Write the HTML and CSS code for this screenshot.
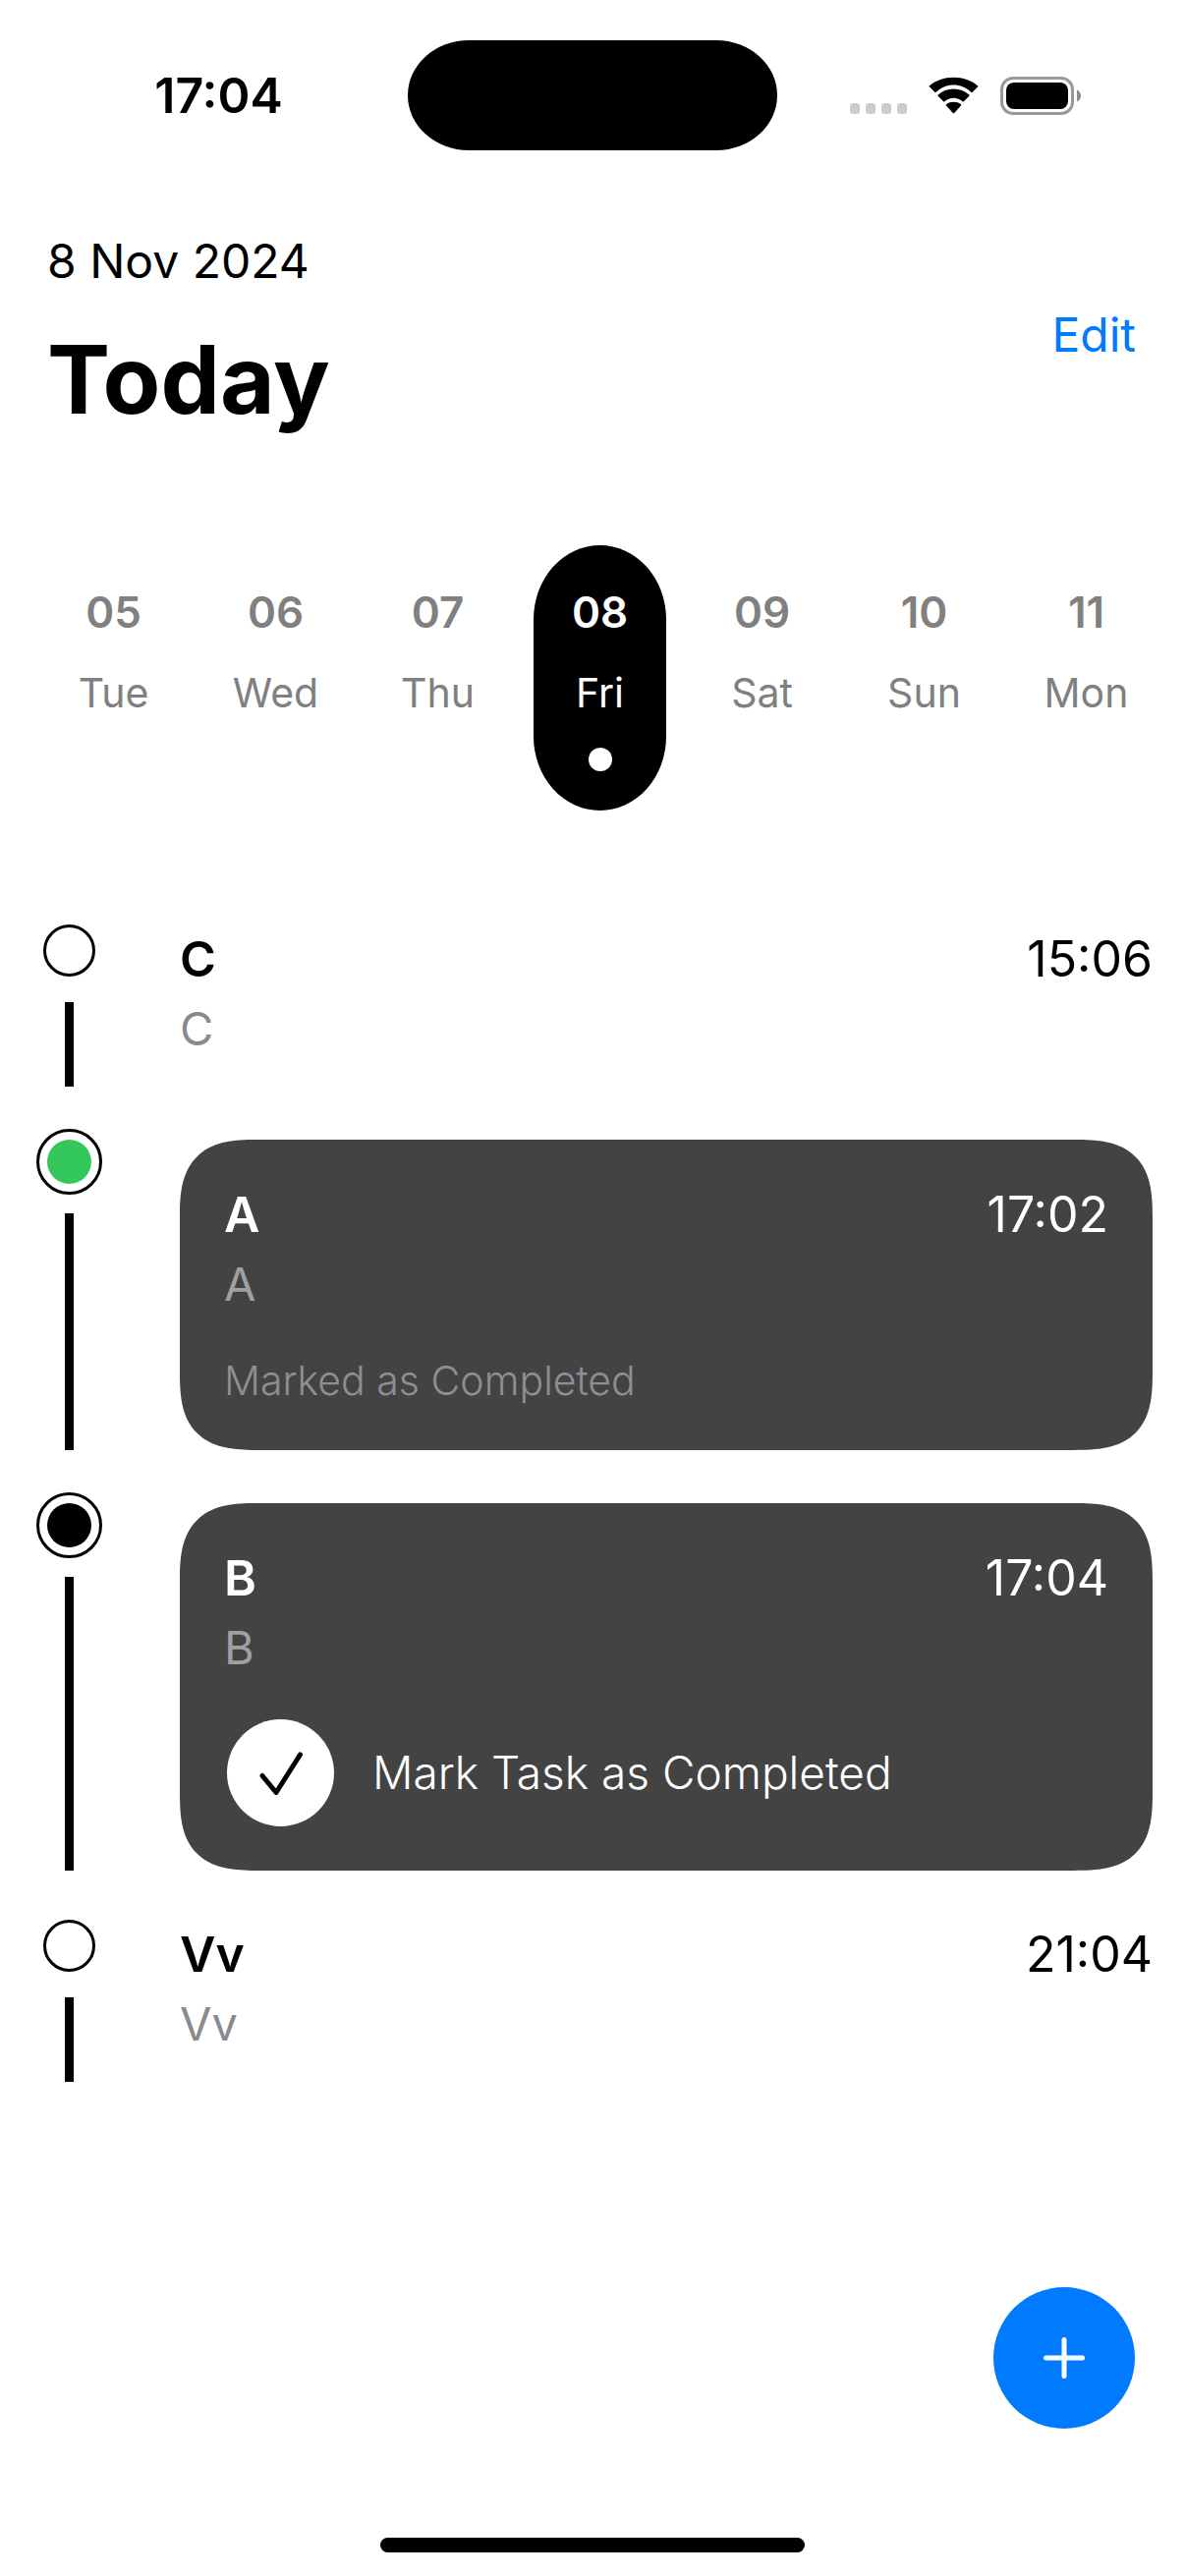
FILE: index.html
```html
<!DOCTYPE html>
<html lang="en">
<head>
<meta charset="utf-8">
<meta name="viewport" content="width=device-width, initial-scale=1">
<title>Today</title>
<link rel="stylesheet" href="styles.css">
</head>
<body>
<div class="screen">
  <div class="status-bar">
    <span class="status-time">17:04</span>
    <span class="island"></span>
    <span class="status-icons">
      <svg class="icon-cell" viewBox="0 0 58 38" aria-hidden="true">
        <rect x="0" y="27" width="10" height="11" rx="3"/>
        <rect x="16" y="27" width="10" height="11" rx="3"/>
        <rect x="32" y="27" width="10" height="11" rx="3"/>
        <rect x="48" y="27" width="10" height="11" rx="3"/>
      </svg>
      <svg class="icon-wifi" viewBox="0 0 50 37" aria-hidden="true">
        <path d="M25 8.200c6.700 0 12.900 2.600 17.500 7.200.4.400 1 .4 1.300 0l5.200-5.200c.4-.4.400-1 0-1.300C42.600 3.400 34.200.500 25 .500S7.400 3.400 1 8.900c-.4.300-.4.900 0 1.300l5.200 5.200c.3.400.9.400 1.300 0C12.100 10.800 18.300 8.200 25 8.200z"/>
        <path d="M25 21.200c3.400 0 6.500 1.200 8.900 3.400.4.300.9.300 1.300 0l5.300-5.300c.4-.4.400-1 0-1.300-4.100-3.700-9.500-5.800-15.500-5.800S13.600 14.300 9.500 18c-.4.300-.4.900 0 1.300l5.300 5.300c.4.300.9.300 1.300 0 2.400-2.200 5.500-3.400 8.900-3.400z"/>
        <path d="M32.300 28.700c.4-.4.400-1-.1-1.300C30.200 25.900 27.700 25.200 25 25.200s-5.200.7-7.200 2.200c-.5.300-.5.900-.1 1.300l6.600 7.500c.4.400 1 .4 1.400 0z"/>
      </svg>
      <svg class="icon-battery" viewBox="0 0 82 39" aria-hidden="true">
        <rect class="battery-frame" x="1.500" y="1.500" width="72" height="36" rx="11.500"/>
        <rect x="6" y="6" width="63" height="27" rx="8"/>
        <path class="battery-tip" d="M78 13.500c2.300.9 4 3.300 4 6s-1.700 5.100-4 6z"/>
      </svg>
    </span>
  </div>

  <header class="page-header">
    <div class="heading">
      <p class="date">8 Nov 2024</p>
      <h1 class="title">Today</h1>
    </div>
    <button class="edit" type="button">Edit</button>
  </header>

  <nav class="week" aria-label="Days">
    <button class="day" type="button"><span class="day-number">05</span><span class="day-name">Tue</span></button>
    <button class="day" type="button"><span class="day-number">06</span><span class="day-name">Wed</span></button>
    <button class="day" type="button"><span class="day-number">07</span><span class="day-name">Thu</span></button>
    <button class="day day-selected" type="button" aria-current="date"><span class="day-number">08</span><span class="day-name">Fri</span><span class="day-dot"></span></button>
    <button class="day" type="button"><span class="day-number">09</span><span class="day-name">Sat</span></button>
    <button class="day" type="button"><span class="day-number">10</span><span class="day-name">Sun</span></button>
    <button class="day" type="button"><span class="day-number">11</span><span class="day-name">Mon</span></button>
  </nav>

  <main class="tasks">
    <article class="task">
      <div class="rail">
        <span class="marker"><svg class="ring" viewBox="0 0 67 67" aria-hidden="true"><circle cx="33.500" cy="33.500" r="25"/></svg></span>
        <span class="line"></span>
      </div>
      <div class="task-body">
        <div class="task-head"><h2 class="task-title">C</h2><time class="task-time">15:06</time></div>
        <p class="task-note">C</p>
      </div>
    </article>

    <article class="task">
      <div class="rail">
        <span class="marker marker-done"><svg class="ring" viewBox="0 0 67 67" aria-hidden="true"><circle cx="33.500" cy="33.500" r="32"/></svg></span>
        <span class="line"></span>
      </div>
      <div class="task-body card">
        <div class="task-head"><h2 class="task-title">A</h2><time class="task-time">17:02</time></div>
        <p class="task-note">A</p>
        <p class="task-state">Marked as Completed</p>
      </div>
    </article>

    <article class="task">
      <div class="rail">
        <span class="marker marker-now"><svg class="ring" viewBox="0 0 67 67" aria-hidden="true"><circle cx="33.500" cy="33.500" r="32"/></svg></span>
        <span class="line"></span>
      </div>
      <div class="task-body card">
        <div class="task-head"><h2 class="task-title">B</h2><time class="task-time">17:04</time></div>
        <p class="task-note">B</p>
        <div class="task-action">
          <button class="check" type="button" aria-labelledby="mark-b">
            <svg viewBox="0 0 44 44" aria-hidden="true"><path d="M3 24.500 17 41.500 41.500 3"/></svg>
          </button>
          <span class="action-label" id="mark-b">Mark Task as Completed</span>
        </div>
      </div>
    </article>

    <article class="task">
      <div class="rail">
        <span class="marker"><svg class="ring" viewBox="0 0 67 67" aria-hidden="true"><circle cx="33.500" cy="33.500" r="25"/></svg></span>
        <span class="line"></span>
      </div>
      <div class="task-body">
        <div class="task-head"><h2 class="task-title">Vv</h2><time class="task-time">21:04</time></div>
        <p class="task-note">Vv</p>
      </div>
    </article>
  </main>

  <footer class="bottom">
    <button class="add" type="button" aria-label="Add task">
      <svg viewBox="0 0 42 42" aria-hidden="true"><path d="M21 2.500v37M2.500 21h37"/></svg>
    </button>
    <span class="home-indicator"></span>
  </footer>
</div>
</body>
</html>
```
FILE: styles.css
```css
* {
  box-sizing: border-box;
}

body,
h1,
h2,
p {
  margin: 0;
}

body {
  background: #fff;
  color: #000;
  font-family: Inter, "Liberation Sans", sans-serif;
  font-size: 50px;
  line-height: 61px;
}

button {
  padding: 0;
  border: 0;
  background: none;
  color: inherit;
  font: inherit;
  cursor: pointer;
}

.screen {
  display: flex;
  flex-direction: column;
  min-height: 100vh;
}

/* Status bar */
.status-bar {
  display: grid;
  grid-template-columns: 1fr 376px 1fr;
  align-items: center;
  padding: 41px 0 0;
}

.status-time {
  padding-left: 30px;
  text-align: center;
  font-weight: 600;
}

.island {
  height: 112px;
  border-radius: 62px / 56px;
  background: #000;
}

.status-icons {
  display: flex;
  justify-content: flex-end;
  align-items: center;
  gap: 22px;
  padding-right: 106px;
}

.icon-cell {
  width: 58px;
  height: 38px;
  fill: #ccc;
}

.icon-wifi {
  width: 51px;
  height: 38px;
}

.icon-battery {
  width: 82px;
  height: 39px;
}

.battery-frame {
  fill: none;
  stroke: #999;
  stroke-width: 3;
}

.battery-tip {
  fill: #8c8c8c;
}

/* Header */
.page-header {
  display: flex;
  justify-content: space-between;
  align-items: center;
  padding: 82px 50px 0 48px;
}

.date {
  font-size: 48px;
}

.title {
  margin-top: 30px;
  font-size: 96px;
  font-weight: 700;
  line-height: 120px;
}

.edit {
  color: #007aff;
  font-size: 48px;
}

/* Day strip */
.week {
  display: grid;
  grid-template-columns: repeat(7, 1fr);
  gap: 30px;
  padding: 109px 33px 0 48px;
}

.day {
  display: flex;
  flex-direction: column;
  align-items: center;
  gap: 30px;
  min-height: 270px;
  padding: 42px 0 40px;
  color: #808080;
  font-size: 41px;
  line-height: 52px;
}

.day-number {
  font-size: 44px;
  font-weight: 600;
}

.day-selected {
  border-radius: 68px / 76px;
  background: #000;
  color: #fff;
}

.day-dot {
  width: 24px;
  height: 24px;
  border-radius: 50%;
  background: #fff;
}

/* Timeline */
.tasks {
  display: flex;
  flex-direction: column;
  gap: 54px;
  padding: 120px 33px 0 48px;
}

.task {
  display: flex;
  gap: 90px;
}

.rail {
  display: flex;
  flex-direction: column;
  align-items: center;
  gap: 30px;
  width: 45px;
}

.marker {
  display: flex;
  flex: none;
  justify-content: center;
  align-items: center;
  width: 45px;
  height: 45px;
  border-radius: 50%;
}

.marker-done {
  background: #34c759;
}

.marker-now {
  background: #000;
}

.ring {
  flex: none;
  width: 67px;
  height: 67px;
  fill: none;
  stroke: #000;
  stroke-width: 3;
}

.line {
  flex: 1;
  width: 9px;
  background: #000;
}

.task-body {
  flex: 1;
  min-width: 0;
  padding-bottom: 30px;
}

.task-head {
  display: flex;
  justify-content: space-between;
  line-height: 63px;
}

.task-title {
  font-size: 50px;
  font-weight: 600;
}

.task-note {
  margin-top: 10px;
  color: #8a8a8e;
  font-size: 47px;
  line-height: 58px;
}

.card {
  padding: 45px;
  border-radius: 64px;
  background: #434343;
  color: #fff;
}

.card .task-note {
  color: #a0a0a0;
}

.task-state {
  margin-top: 44px;
  color: #8e8e93;
  font-size: 41px;
  font-weight: 300;
  line-height: 51px;
}

.task-action {
  display: flex;
  align-items: center;
  gap: 39px;
  margin-top: 44px;
  padding-left: 3px;
}

.check {
  display: flex;
  flex: none;
  justify-content: center;
  align-items: center;
  width: 109px;
  height: 109px;
  border-radius: 50%;
  background: #fff;
}

.check svg {
  width: 44px;
  height: 44px;
  fill: none;
  stroke: #000;
  stroke-width: 5;
  stroke-linecap: round;
  stroke-linejoin: round;
}

.action-label {
  font-size: 46px;
  font-weight: 300;
}

/* Continuous corners where the browser can draw them */
@supports (corner-shape: squircle) {
  .card {
    border-radius: 80px;
    corner-shape: superellipse(1.5);
  }
}

/* Bottom area */
.bottom {
  display: flex;
  flex-direction: column;
  align-items: center;
  gap: 111px;
  margin-top: auto;
  padding: 60px 51px 24px;
}

.add {
  display: flex;
  justify-content: center;
  align-items: center;
  align-self: flex-end;
  width: 144px;
  height: 144px;
  border-radius: 50%;
  background: #007aff;
}

.add svg {
  width: 42px;
  height: 42px;
  fill: none;
  stroke: #fff;
  stroke-width: 5;
  stroke-linecap: round;
}

.home-indicator {
  width: 432px;
  height: 15px;
  border-radius: 8px;
  background: #000;
}
```
